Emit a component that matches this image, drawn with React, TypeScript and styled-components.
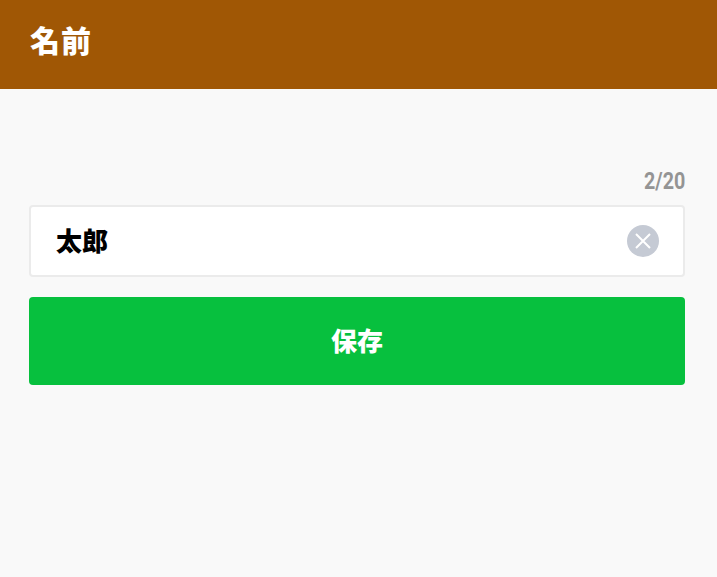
import React, { useState } from 'react';
import styled, { createGlobalStyle } from 'styled-components';

const GlobalStyle = createGlobalStyle`
  html, body {
    margin: 0;
    padding: 0;
    background: #f9f9f9;
    font-family: "Roboto", "Noto Sans CJK JP", sans-serif;
  }
`;

const Page = styled.div`
  min-height: 577px;
  background: #f9f9f9;
`;

const Header = styled.header`
  display: flex;
  align-items: center;
  height: 89px;
  padding: 0 30px 12px;
  box-sizing: border-box;
  background: #a05705;
`;

const Title = styled.h1`
  margin: 0;
  color: #fff;
  font-family: "Noto Sans CJK JP", sans-serif;
  font-size: 30px;
  font-weight: 900;
  letter-spacing: 1px;
`;

const Form = styled.form`
  display: flex;
  flex-direction: column;
  padding: 78px 32px 0 29px;
`;

const Counter = styled.div`
  align-self: flex-end;
  height: 28px;
  margin-bottom: 10px;
  color: #949494;
  font-family: "Roboto", sans-serif;
  font-size: 24px;
  font-weight: 700;
  line-height: 28px;
  transform: scaleX(0.82);
  transform-origin: right center;
`;

const Field = styled.div`
  display: flex;
  align-items: center;
  height: 72px;
  padding: 0 24px 0 25px;
  box-sizing: border-box;
  background: #fff;
  border: 2px solid #ebebeb;
  border-radius: 4px;
`;

const NameInput = styled.input`
  flex: 1;
  min-width: 0;
  padding: 0 0 4px;
  border: 0;
  outline: 0;
  background: transparent;
  color: #000;
  font-family: "Noto Sans CJK JP", sans-serif;
  font-size: 26px;
  font-weight: 900;
`;

const ClearButton = styled.button`
  display: flex;
  align-items: center;
  justify-content: center;
  width: 32px;
  height: 32px;
  padding: 0;
  border: 0;
  border-radius: 50%;
  background: #c5cad4;
`;

const SaveButton = styled.button`
  height: 88px;
  margin-top: 20px;
  padding: 0 0 4px;
  border: 0;
  border-radius: 4px;
  background: #07c03e;
  color: #fff;
  font-family: "Noto Sans CJK JP", sans-serif;
  font-size: 26px;
  font-weight: 900;
`;

const App = () => {
  const [name, setName] = useState('太郎');

  return (
    <Page>
      <GlobalStyle />
      <Header>
        <Title>名前</Title>
      </Header>
      <Form onSubmit={(e) => e.preventDefault()}>
        <Counter>{name.length}/20</Counter>
        <Field>
          <NameInput value={name} maxLength={20} onChange={(e) => setName(e.target.value)} />
          <ClearButton type="button" onClick={() => setName('')}>
            <svg width="18" height="18" viewBox="0 0 18 18">
              <path d="M2 2 L16 16 M16 2 L2 16" stroke="#fff" strokeWidth="2" fill="none" />
            </svg>
          </ClearButton>
        </Field>
        <SaveButton type="submit">保存</SaveButton>
      </Form>
    </Page>
  );
};

export default App;
